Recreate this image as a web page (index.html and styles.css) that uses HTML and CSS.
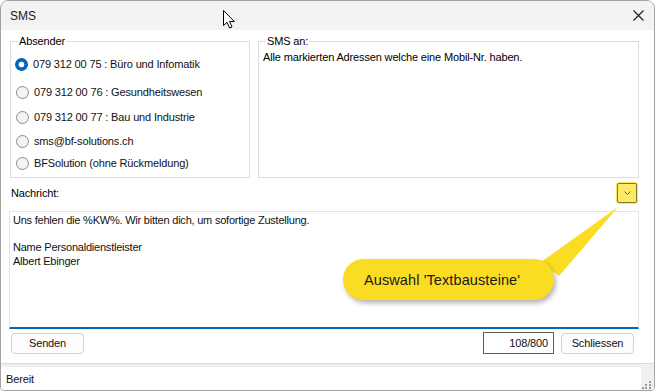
FILE: index.html
```html
<!DOCTYPE html>
<html lang="de">
<head>
  <meta charset="UTF-8" />
  <title>SMS</title>
  <link rel="stylesheet" href="styles.css">
</head>
<body>
  <div class="window">
    <!-- Titelleiste -->
    <div class="titlebar">
      <span class="title">SMS</span>
      <button class="close" title="Schliessen">
        <svg width="11" height="11" viewBox="0 0 11 11"><path d="M0.5 0.5 L10.5 10.5 M10.5 0.5 L0.5 10.5" stroke="#1b1b1b" stroke-width="1.1" fill="none"/></svg>
      </button>
    </div>

    <div class="content">
      <div class="top-row">
        <fieldset class="group sender">
          <legend>Absender</legend>
          <div class="options">
            <label class="opt"><span class="radio checked"></span>079 312 00 75 : Büro und Infomatik</label>
            <label class="opt"><span class="radio"></span>079 312 00 76 : Gesundheitswesen</label>
            <label class="opt"><span class="radio"></span>079 312 00 77 : Bau und Industrie</label>
            <label class="opt"><span class="radio"></span>sms@bf-solutions.ch</label>
            <label class="opt"><span class="radio"></span>BFSolution (ohne Rückmeldung)</label>
          </div>
        </fieldset>
        <fieldset class="group recipients">
          <legend>SMS an:</legend>
          <p>Alle markierten Adressen welche eine Mobil-Nr. haben.</p>
        </fieldset>
      </div>

      <div class="msg-head">
        <span>Nachricht:</span>
        <button class="drop">
          <svg width="7" height="4" viewBox="0 0 7 4"><path d="M0.5 0.5 L3.5 3.5 L6.5 0.5" stroke="#5a5a5a" fill="none"/></svg>
        </button>
      </div>

      <div class="message">Uns fehlen die %KW%. Wir bitten dich, um sofortige Zustellung.<br><br>Name Personaldienstleister<br>Albert Ebinger</div>

      <div class="actions">
        <button class="btn">Senden</button>
        <div class="spacer"></div>
        <div class="counter">108/800</div>
        <button class="btn">Schliessen</button>
      </div>
    </div>

    <div class="statusbar">
      <span class="status-text">Bereit</span>
      <div class="grip">
        <svg width="10" height="10" viewBox="0 0 10 10" fill="#9a9a9a">
          <rect x="8" y="2" width="2" height="2"/>
          <rect x="4" y="5" width="2" height="2"/><rect x="8" y="5" width="2" height="2"/>
          <rect x="1" y="8" width="2" height="2"/><rect x="4" y="8" width="2" height="2"/><rect x="8" y="8" width="2" height="2"/>
        </svg>
      </div>
    </div>

    <!-- Hinweis-Sprechblase -->
    <svg class="callout-tail" width="90" height="80" viewBox="0 0 90 80">
      <polygon points="2,56 20,70 79,1" fill="#fadd22"/>
    </svg>
    <div class="callout">Auswahl 'Textbausteine'</div>

    <!-- Mauszeiger -->
    <svg class="cursor" width="13" height="19" viewBox="0 0 13 19">
      <path d="M0.5 0.5 V15.5 L4 12.3 L6.6 18 L9 17 L6.5 11.5 H11.3 Z" fill="#fff" stroke="#000" stroke-width="1" stroke-linejoin="round"/>
    </svg>
  </div>
</body>
</html>
```

FILE: styles.css
```css
body {
  margin: 0;
  background: #fff;
  font-family: 'Liberation Sans', Arial, sans-serif;
  font-size: 11px;
  letter-spacing: -0.15px;
  color: #000;
}

.window {
  position: relative;
  width: 655px;
  height: 391px;
  box-sizing: border-box;
  border: 1px solid #a3a3a3;
  border-radius: 8px 8px 4px 4px;
  background: #fff;
  display: flex;
  flex-direction: column;
  overflow: hidden;
}

.titlebar {
  height: 29px;
  flex: none;
  background: #f3f3f3;
  display: flex;
  align-items: center;
  justify-content: space-between;
  padding: 0 10px 0 9px;
}

.title {
  font-size: 12px;
  letter-spacing: 0;
  color: #1a1a1a;
}

.close {
  background: none;
  border: none;
  padding: 0;
  width: 11px;
  height: 11px;
  display: flex;
  margin-top: -1px;
}

.content {
  flex: none;
  padding: 5px 15px 0 8px;
}

.top-row {
  display: flex;
  gap: 8px;
  height: 143px;
  margin-left: 1px;
}

.group {
  margin: 0;
  border: 1px solid #dcdcdc;
  min-width: 0;
  box-sizing: border-box;
  height: 143px;
}

.group legend {
  padding: 0 1px;
  margin-left: 3px;
  line-height: 13px;
  color: #000;
}

.sender {
  width: 240px;
  padding: 9px 4px 0 4px;
}

.recipients {
  flex: 1;
  padding: 3px 4px 0 4px;
}

.recipients p {
  margin: 0;
  line-height: 13px;
}

.options {
  display: grid;
  grid-template-rows: 28px 25px 24px 22px 22px;
  align-items: start;
}

.opt {
  display: flex;
  align-items: center;
  gap: 5px;
  height: 14px;
  line-height: 14px;
  color: #111;
}

.radio {
  width: 11px;
  height: 11px;
  border: 1px solid #8a8a8a;
  border-radius: 50%;
  background: #f3f3f3;
  flex: none;
  margin-left: 1px;
}

.radio.checked {
  width: 13px;
  height: 13px;
  border: none;
  margin-left: 0;
  background: radial-gradient(circle, #fff 0 2.6px, #0067c0 3.2px);
}

.msg-head {
  height: 22px;
  margin: 4px 2px 0 2px;
  display: flex;
  align-items: center;
  justify-content: space-between;
}

.drop {
  width: 20px;
  height: 20px;
  padding: 0;
  background: #fde96a;
  border: 1px solid #85772c;
  border-radius: 2px;
  box-shadow: 0 0 0 1px #fbe55a;
  display: flex;
  align-items: center;
  justify-content: center;
}

.message {
  margin-top: 7px;
  height: 112px;
  border: 1px solid #e3e3e3;
  border-bottom: 2px solid #0067c0;
  padding: 2px 3px 1px;
  letter-spacing: -0.22px;
  line-height: 13.5px;
  color: #111;
}

.actions {
  margin: 3px 5px 0 2px;
  height: 22px;
  display: flex;
  align-items: center;
  gap: 7px;
}

.spacer {
  flex: 1;
}

.btn {
  height: 21px;
  width: 73px;
  padding: 0;
  background: #fdfdfd;
  border: 1px solid #d0d0d0;
  border-radius: 4px;
  font-family: inherit;
  font-size: 11px;
  letter-spacing: -0.15px;
  color: #111;
}

.counter {
  width: 71px;
  height: 22px;
  box-sizing: border-box;
  border: 1px solid #5c5c5c;
  text-align: right;
  padding-right: 5px;
  line-height: 20px;
  color: #111;
}

.statusbar {
  margin-top: auto;
  height: 26px;
  flex: none;
  display: flex;
  border-top: 1px solid #dadada;
  background: linear-gradient(#f0f0f0 0 3px, #fff 3px);
}

.status-text {
  flex: 1;
  padding: 3px 0 0 5px;
  display: flex;
  align-items: center;
  color: #111;
}

.grip {
  width: 13px;
  background: #f0f0f0;
  display: flex;
  align-items: flex-end;
  padding-bottom: 1px;
}

.callout-tail {
  position: absolute;
  left: 538px;
  top: 205px;
}

.callout {
  position: absolute;
  left: 342px;
  top: 258px;
  width: 211px;
  height: 41px;
  box-sizing: border-box;
  border-radius: 21px;
  background: #fadd22;
  box-shadow: 2px 3px 5px rgba(0, 0, 0, 0.3);
  padding-left: 21px;
  display: flex;
  align-items: center;
  font-size: 14.5px;
  letter-spacing: 0.1px;
  color: #1a1a1a;
}

.cursor {
  position: absolute;
  left: 222px;
  top: 9px;
}
```
